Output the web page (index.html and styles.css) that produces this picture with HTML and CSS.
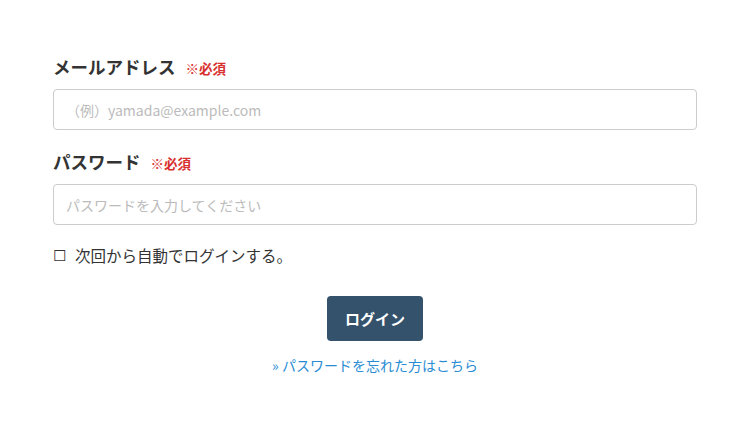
FILE: index.html
```html
<!DOCTYPE html>
<html lang="ja">
<head>
    <meta charset="UTF-8">
    <meta name="viewport" content="width=device-width, initial-scale=1.0">
    <title>ログイン</title>
    <link rel="stylesheet" href="styles.css">
</head>
<body>
    <form class="login">
        <div class="field">
            <label class="label" for="email">メールアドレス <span class="required">※必須</span></label>
            <input class="input" id="email" type="text" placeholder="（例）yamada@example.com">
        </div>
        <div class="field">
            <label class="label" for="password">パスワード <span class="required">※必須</span></label>
            <input class="input" id="password" type="password" placeholder="パスワードを入力してください">
        </div>
        <div class="remember">
            <span class="box">☐</span>
            <span>次回から自動でログインする。</span>
        </div>
        <div class="actions">
            <button type="button" class="btn">ログイン</button>
            <a class="forgot" href="#">» パスワードを忘れた方はこちら</a>
        </div>
    </form>
</body>
</html>
```

FILE: styles.css
```css
body {
    margin: 0;
    padding: 0;
    background-color: #fff;
    font-family: 'Noto Sans CJK JP', 'Noto Sans', sans-serif;
    color: #333;
}

.login {
    width: 644px;
    margin: 0 0 0 53px;
    padding-top: 54px;
    display: flex;
    flex-direction: column;
}

.field {
    display: flex;
    flex-direction: column;
    margin-bottom: 19px;
}

.label {
    font-size: 17.5px;
    font-weight: bold;
    line-height: 26px;
    margin-bottom: 8px;
    color: #333;
}

.required {
    font-size: 13.5px;
    color: #d8302f;
    margin-left: 6px;
}

.input {
    box-sizing: border-box;
    height: 41px;
    border: 1px solid #ccc;
    border-radius: 4px;
    padding: 0 12px;
    font-family: inherit;
    font-size: 14px;
    color: #333;
}

.input::placeholder {
    color: #bbb;
}

.remember {
    display: flex;
    align-items: center;
    font-size: 15.5px;
    line-height: 22px;
}

.box {
    font-size: 15px;
    margin-right: 9px;
}

.actions {
    display: flex;
    flex-direction: column;
    align-items: center;
    margin-top: 30px;
}

.btn {
    height: 45px;
    padding: 0 18px;
    background-color: #34526b;
    color: #fff;
    border: none;
    border-radius: 4px;
    font-family: inherit;
    font-size: 15px;
    font-weight: bold;
    cursor: pointer;
}

.forgot {
    margin-top: 14px;
    font-size: 14px;
    line-height: 20px;
    color: #2a8dd4;
    text-decoration: none;
}
```
